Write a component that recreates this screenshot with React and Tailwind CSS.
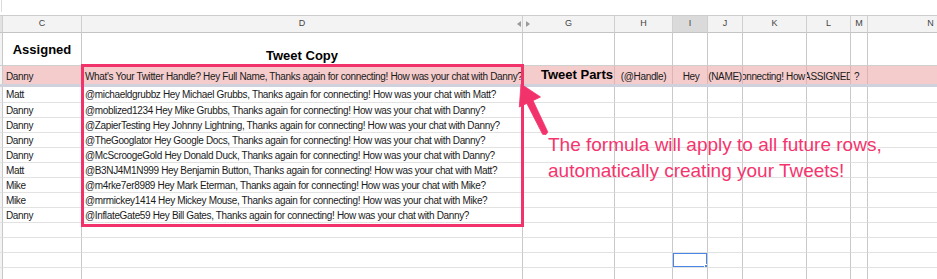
import React from "react";

const W = [
  "w-[3px]",
  "w-[79px]",
  "w-[441px]",
  "w-[92px]",
  "w-[58px]",
  "w-[35px]",
  "w-[35px]",
  "w-[64px]",
  "w-[44px]",
  "w-[17px]",
  "w-[126px]",
];

const LETTERS = ["", "C", "D", "G", "H", "I", "J", "K", "L", "M", "N"];

const DATA = [
  ["Matt", "@michaeldgrubbz Hey Michael Grubbs, Thanks again for connecting! How was your chat with Matt?"],
  ["Danny", "@moblized1234 Hey Mike Grubbs, Thanks again for connecting! How was your chat with Danny?"],
  ["Danny", "@ZapierTesting Hey Johnny Lightning, Thanks again for connecting! How was your chat with Danny?"],
  ["Danny", "@TheGooglator Hey Google Docs, Thanks again for connecting! How was your chat with Danny?"],
  ["Danny", "@McScroogeGold Hey Donald Duck, Thanks again for connecting! How was your chat with Danny?"],
  ["Matt", "@B3NJ4M1N999 Hey Benjamin Button, Thanks again for connecting! How was your chat with Matt?"],
  ["Mike", "@m4rke7er8989 Hey Mark Eterman, Thanks again for connecting! How was your chat with Mike?"],
  ["Mike", "@mrmickey1414 Hey Mickey Mouse, Thanks again for connecting! How was your chat with Mike?"],
  ["Danny", "@InflateGate59 Hey Bill Gates, Thanks again for connecting! How was your chat with Danny?"],
];

function GridRow({ h, cells = [], selected = false }) {
  return (
    <div className={`flex shrink-0 ${h}`}>
      {W.map((w, i) => (
        <div
          key={i}
          className={`${w} shrink-0 h-full border-r border-b border-r-[#c9c9c9] border-b-[#e2e2e2] ${
            i === 0 ? "bg-[#f3f3f3]" : "bg-white"
          } relative flex items-center overflow-hidden whitespace-nowrap`}
        >
          {cells[i] !== undefined && (
            <span className="pl-[3px] text-[10px] tracking-[-0.35px] text-[#1a1a1a]">{cells[i]}</span>
          )}
          {selected && i === 5 && (
            <div className="absolute inset-0 border-[1.5px] border-[#4a86e8]">
              <div className="absolute right-[-3px] bottom-[-3px] w-[5px] h-[5px] bg-[#4a86e8] border border-white" />
            </div>
          )}
        </div>
      ))}
    </div>
  );
}

export default function App() {
  return (
    <div
      className="relative w-[937px] h-[279px] overflow-hidden bg-white"
      style={{ fontFamily: '"Liberation Sans", Arial, sans-serif' }}
    >
      <div className="flex flex-col">
        {/* top blank strip */}
        <div className="h-[15px] shrink-0 flex">
          <div className="ml-[1px] w-[1px] h-[12px] bg-[#dcdcdc]" />
        </div>

        {/* column header row */}
        <div className="flex h-[18px] shrink-0 border-t border-[#cdcdcd]">
          {W.map((w, i) => (
            <div
              key={i}
              className={`${w} shrink-0 h-full border-r border-b border-r-[#d0d0d0] border-b-[#c4c4c4] ${
                i === 5 ? "bg-[#dadada]" : i === 0 ? "bg-[#e2e2e2]" : "bg-[#f3f3f3]"
              } relative flex items-center justify-center text-[9px] text-[#444]`}
            >
              {LETTERS[i]}
              {i === 2 && (
                <span className="absolute right-[1px] top-[5px] w-0 h-0 border-y-[3px] border-y-transparent border-r-[4px] border-r-[#9a9a9a]" />
              )}
              {i === 3 && (
                <span className="absolute left-[3px] top-[5px] w-0 h-0 border-y-[3px] border-y-transparent border-l-[4px] border-l-[#9a9a9a]" />
              )}
            </div>
          ))}
        </div>

        {/* title row */}
        <div className="flex h-[33px] shrink-0">
          {W.map((w, i) => (
            <div
              key={i}
              className={`${w} shrink-0 h-full border-r border-b border-r-[#c9c9c9] border-b-[#cfcfcf] ${
                i === 0 ? "bg-[#f3f3f3]" : "bg-white"
              } flex justify-center ${i === 2 ? "items-end pb-[2px]" : "items-center"} font-bold text-[13px] leading-[15px] text-black whitespace-nowrap`}
            >
              {i === 1 && "Assigned"}
              {i === 2 && "Tweet Copy"}
            </div>
          ))}
        </div>

        {/* pink formula row */}
        <div className="flex h-[18px] shrink-0 text-[10px] tracking-[-0.35px] text-[#1a1a1a]">
          <div className="w-[3px] shrink-0 h-full bg-[#f3f3f3] border-r border-[#c9c9c9]" />
          <div className="w-[79px] shrink-0 h-full bg-[#f4cccc] border-r border-[#dcb4b4] flex items-center pl-[3px] pt-[2px]">
            Danny
          </div>
          <div className="w-[441px] shrink-0 h-full bg-[#f4cccc] border-r border-[#dcb4b4] flex items-center pl-[3px] pt-[2px] overflow-hidden whitespace-nowrap">
            What's Your Twitter Handle? Hey Full Name, Thanks again for connecting! How was your chat with Danny?
          </div>
          <div className="w-[92px] shrink-0 h-full bg-[#f4cccc] border-r border-[#dcb4b4] flex items-center justify-end pr-[1px] font-bold text-[13px] tracking-normal text-black whitespace-nowrap overflow-hidden">
            Tweet Parts
          </div>
          <div className="w-[58px] shrink-0 h-full bg-[#f4cccc] border-r border-[#dcb4b4] flex items-center justify-center pt-[2px] whitespace-nowrap overflow-hidden">
            (@Handle)
          </div>
          <div className="w-[35px] shrink-0 h-full bg-[#f4cccc] border-r border-[#dcb4b4] flex items-center justify-center pt-[2px] pl-[2px] whitespace-nowrap overflow-hidden">
            Hey
          </div>
          <div className="w-[35px] shrink-0 h-full bg-[#f4cccc] border-r border-[#dcb4b4] flex items-center justify-center pt-[2px] whitespace-nowrap overflow-hidden">
            (NAME)
          </div>
          <div className="w-[64px] shrink-0 h-full bg-[#f4cccc] border-r border-[#dcb4b4] flex items-center justify-end pr-[1px] pt-[2px] whitespace-nowrap overflow-hidden">
            , Thanks again for connecting! How
          </div>
          <div className="w-[44px] shrink-0 h-full bg-[#f4cccc] border-r border-[#dcb4b4] flex items-center justify-center pt-[2px] whitespace-nowrap overflow-hidden">
            (ASSIGNED)
          </div>
          <div className="w-[17px] shrink-0 h-full bg-[#f4cccc] border-r border-[#dcb4b4] flex items-center pl-[3px] pt-[2px]">
            ?
          </div>
          <div className="w-[126px] shrink-0 h-full bg-[#f4cccc]" />
        </div>

        {/* frozen separator */}
        <div className="h-[3px] shrink-0 bg-[#cfd2dc]" />

        {DATA.map((r, idx) => (
          <GridRow key={idx} h={idx === 0 ? "h-[16px]" : "h-[15px]"} cells={[undefined, r[0], r[1]]} />
        ))}

        <GridRow h="h-[15px]" />
        <GridRow h="h-[15px]" />
        <GridRow h="h-[15px]" selected />
        <GridRow h="h-[15px]" />
      </div>

      {/* highlight box around Tweet Copy column */}
      <div className="absolute left-[81px] top-[64px] w-[443px] h-[163px] border-[3px] border-[#f2336b] pointer-events-none" />

      {/* arrow */}
      <svg className="absolute left-0 top-0 pointer-events-none" width="937" height="279" viewBox="0 0 937 279">
        <polygon
          points="521,84 540.5,97 533,100.6 547.8,131.9 546,134.6 542.6,134.3 526.8,103.4 519.3,107"
          fill="#f2336b"
          stroke="#f2336b"
          strokeWidth="0.8"
          strokeLinejoin="round"
        />
      </svg>

      {/* annotation */}
      <div className="absolute left-[548px] top-[132px] text-[19px] leading-[26px] text-[#f5346d] whitespace-nowrap">
        The formula will apply to all future rows,
        <br />
        automatically creating your Tweets!
      </div>
    </div>
  );
}
